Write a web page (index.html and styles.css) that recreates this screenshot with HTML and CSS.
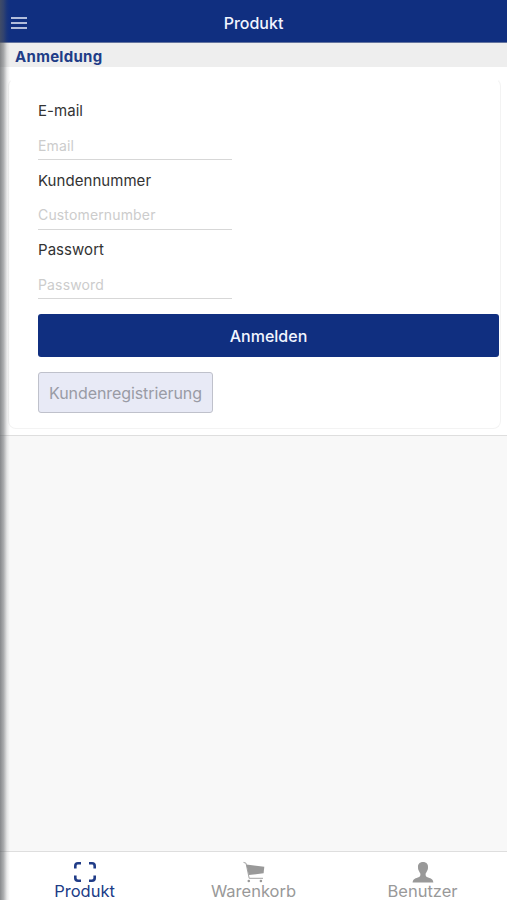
FILE: index.html
```html
<!DOCTYPE html>
<html lang="de">
<head>
  <meta charset="UTF-8">
  <title>Produkt</title>
  <link rel="stylesheet" href="styles.css">
</head>
<body>
  <div class="app">
    <header class="navbar">
      <button class="menu-button" type="button" aria-label="Menü">
        <span></span><span></span><span></span>
      </button>
      <h1>Produkt</h1>
    </header>
    <h2 class="section-title">Anmeldung</h2>

    <main class="content">
      <form class="card">
        <label for="email">E-mail</label>
        <input id="email" type="text" placeholder="Email">
        <label for="number">Kundennummer</label>
        <input id="number" type="text" placeholder="Customernumber">
        <label for="password">Passwort</label>
        <input id="password" type="password" placeholder="Password">
        <button class="btn-login" type="button">Anmelden</button>
        <button class="btn-register" type="button">Kundenregistrierung</button>
      </form>
    </main>

    <nav class="tabbar">
      <a class="tab active">
        <svg width="24" height="22" viewBox="0 0 24 22" fill="none" stroke="currentColor" stroke-width="2.6">
          <path d="M8 2.3H5Q2.3 2.3 2.3 5V7.5M16 2.3H19Q21.7 2.3 21.7 5V7.5M2.3 14.5V17Q2.3 19.7 5 19.7H8M16 19.7H19Q21.7 19.7 21.7 17V14.5"/>
        </svg>
        <span>Produkt</span>
      </a>
      <a class="tab">
        <svg width="24" height="22" viewBox="0 0 24 22">
          <path d="M4.3 3.6L22.3 5.7L21.6 12.3L6.8 14Z" fill="currentColor"/>
          <path d="M1.5 1.4L4 2.2L7.2 17.3H21" fill="none" stroke="currentColor" stroke-width="0.9"/>
          <circle cx="6.8" cy="20" r="1.3" fill="currentColor"/>
          <circle cx="18.9" cy="20" r="1.3" fill="currentColor"/>
        </svg>
        <span>Warenkorb</span>
      </a>
      <a class="tab">
        <svg width="24" height="22" viewBox="0 0 24 22" fill="currentColor">
          <path d="M12 1C8.6 1 6.8 3.1 7 6.2C7 8 7.3 8.6 7.7 9.5C8.3 11 9.2 12 9.4 12.8C9.5 15.3 9 15.7 6.8 16.5C3.6 17.6 2 18.2 1.6 21.5H22.4C22 18.2 20.4 17.6 17.2 16.5C15 15.7 14.5 15.3 14.6 12.8C14.8 12 15.7 11 16.3 9.5C16.7 8.6 17 8 17 6.2C17.2 3.1 15.4 1 12 1Z"/>
        </svg>
        <span>Benutzer</span>
      </a>
    </nav>
    <div class="edge-shadow"></div>
  </div>
</body>
</html>
```
FILE: styles.css
```css
* {
  box-sizing: border-box;
}
body {
  margin: 0;
  font-family: Inter, "Liberation Sans", sans-serif;
  color: #333;
}
.app {
  position: relative;
  display: flex;
  flex-direction: column;
  height: 900px;
  overflow: hidden;
  background-color: #f8f8f8;
}
.navbar {
  display: grid;
  grid-template-columns: 38px 1fr 38px;
  align-items: center;
  height: 43px;
  padding-top: 3px;
  background-color: #102f80;
  border-bottom: 1px solid #64749f;
}
.menu-button {
  display: flex;
  flex-direction: column;
  gap: 3px;
  width: 16px;
  margin: 0 0 0 11px;
  padding: 0;
  border: 0;
  background: none;
}
.menu-button span {
  width: 16px;
  height: 2px;
  background-color: #b2bddb;
}
h1 {
  margin: 0;
  padding-top: 1px;
  text-align: center;
  font-size: 16px;
  font-weight: 500;
  line-height: 20px;
  color: #f2f5ff;
}
.section-title {
  height: 24px;
  margin: 0;
  padding-left: 15px;
  background-color: #eee;
  color: #203c87;
  font-size: 15px;
  font-weight: 700;
  line-height: 27px;
  letter-spacing: 0.3px;
}
.content {
  height: 369px;
  padding: 11px 6px 6px 8px;
  background-color: #fff;
  border-bottom: 1px solid #dedede;
}
.card {
  display: flex;
  flex-direction: column;
  align-items: flex-start;
  height: 351px;
  padding: 20px 1px 0 29px;
  border: 1px solid #f3f3f3;
  border-top-color: transparent;
  border-radius: 8px;
}
label {
  height: 24px;
  font-size: 15px;
  line-height: 24px;
  letter-spacing: 0.05px;
}
input {
  width: 194px;
  height: 37px;
  margin-bottom: 8.5px;
  padding: 8px 0 0;
  border: 0;
  border-bottom: 1px solid #d7d7d7;
  border-radius: 0;
  background: none;
  font-family: inherit;
  font-size: 14px;
  letter-spacing: 0.15px;
  outline: none;
}
input::placeholder {
  color: #ccc;
  opacity: 1;
}
.btn-login {
  width: 461px;
  height: 43px;
  margin-top: 6.5px;
  border: 0;
  border-radius: 3px;
  background-color: #102f80;
  color: #f2f5ff;
  font-family: inherit;
  font-size: 16px;
  font-weight: 500;
  flex-shrink: 0;
}
.btn-register {
  width: 175px;
  height: 41px;
  margin-top: 14.5px;
  padding: 2px 0 0;
  border: 1px solid #bfc1cb;
  border-radius: 3px;
  background-color: #e8eaf6;
  color: #999ba5;
  font-family: inherit;
  font-size: 16px;
  letter-spacing: -0.08px;
  flex-shrink: 0;
}
.tabbar {
  display: grid;
  grid-template-columns: repeat(3, 1fr);
  height: 49px;
  margin-top: auto;
  background-color: #fff;
  border-top: 1px solid #dedede;
}
.tab {
  display: flex;
  flex-direction: column;
  align-items: center;
  padding-top: 9px;
  color: #999;
  font-size: 16.5px;
  line-height: 17px;
}
.tab svg {
  display: block;
  flex-shrink: 0;
}
.tab.active {
  color: #203c87;
}
.edge-shadow {
  position: absolute;
  top: 0;
  left: 0;
  width: 10px;
  height: 100%;
  background: linear-gradient(to right, rgba(85, 88, 92, 0.7), rgba(85, 88, 92, 0.48) 35%, rgba(85, 88, 92, 0.12) 70%, transparent);
}
```
